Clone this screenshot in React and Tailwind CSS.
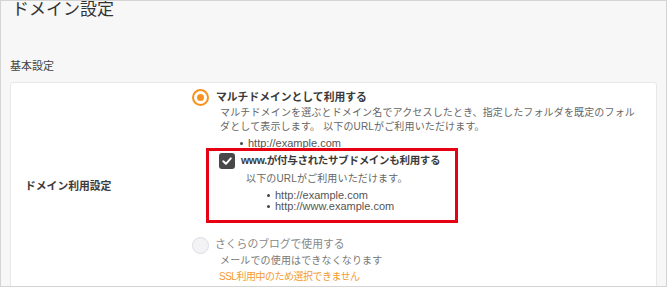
const F = "font-['Liberation_Sans','Noto_Sans_CJK_JP',sans-serif]";

function Dot() {
  return <span className="w-[3px] h-[3px] rounded-full bg-[#444] shrink-0" />;
}

export default function App() {
  return (
    <div className={`w-[668px] h-[288px] bg-white ${F}`}>
      <div className="w-[667px] h-[287px] border border-[#d4d4d4] bg-[#f7f7f7] overflow-hidden">
        <div className="-mt-px pl-[11px] h-[20px] leading-[20px] text-[17px] text-[#333]">ドメイン設定</div>
        <div className="mt-[38px] pl-[9px] h-[16px] leading-[16px] text-[11px] text-[#444]">基本設定</div>
        <div className="mt-[8px] ml-[9px] w-[647px] h-[260px] bg-white border border-[#e8e8e8] rounded-[3px] flex">
          <div className="w-[181px] shrink-0 pl-[14px] pt-[95px]">
            <div className="leading-[16px] text-[10.8px] font-bold text-[#3a3a3a] whitespace-nowrap">ドメイン利用設定</div>
          </div>
          <div className="pt-[6px]">
            <div className="flex items-center h-[16px]">
              <span className="w-[17px] h-[17px] rounded-full border-2 border-[#f7931e] bg-white flex items-center justify-center shrink-0">
                <span className="w-[7px] h-[7px] rounded-full bg-[#f7931e]" />
              </span>
              <span className="ml-[7px] text-[10.8px] font-bold text-[#3a3a3a] whitespace-nowrap">マルチドメインとして利用する</span>
            </div>
            <div className="mt-[1px] pl-[28px] text-[10px] tracking-[0.15px] leading-[14px] text-[#666] whitespace-nowrap">
              マルチドメインを選ぶとドメイン名でアクセスしたとき、指定したフォルダを既定のフォル<br />
              ダとして表示します。 以下のURLがご利用いただけます。
            </div>
            <div className="mt-[3px] pl-[48px] flex items-center h-[12px]">
              <Dot />
              <span className="ml-[5px] text-[11px] text-[#555] whitespace-nowrap">http://example.com</span>
            </div>
            <div className="relative -mt-px ml-[14px] w-[252px] border-[3px] border-[#e60012] pt-[2px] pb-[8px]">
              <div className="flex items-center h-[16px] pl-[10px]">
                <span className="w-[16px] h-[16px] rounded-[3px] bg-[#484848] flex items-center justify-center shrink-0">
                  <svg width="12" height="12" viewBox="0 0 12 12" fill="none">
                    <path d="M2.3 6.3 L4.9 8.8 L9.8 3.4" stroke="white" strokeWidth="2" strokeLinecap="round" strokeLinejoin="round" />
                  </svg>
                </span>
                <span className="ml-[6px] text-[10.5px] tracking-[-0.3px] font-bold text-[#3a3a3a] whitespace-nowrap">www.が付与されたサブドメインも利用する</span>
              </div>
              <div className="mt-[3px] pl-[37px] text-[10px] tracking-[0.15px] leading-[14px] text-[#666] whitespace-nowrap">以下のURLがご利用いただけます。</div>
              <div className="mt-[4px] pl-[58px]">
                <div className="flex items-center h-[11px]">
                  <Dot />
                  <span className="ml-[5px] text-[11px] text-[#555] whitespace-nowrap">http://example.com</span>
                </div>
                <div className="flex items-center h-[11px]">
                  <Dot />
                  <span className="ml-[5px] text-[11px] text-[#555] whitespace-nowrap">http://www.example.com</span>
                </div>
              </div>
            </div>
            <div className="mt-[13px] flex items-center h-[16px]">
              <span className="w-[17px] h-[17px] rounded-full border border-[#dcdce2] bg-[#f3f3f6] shrink-0 translate-y-[1px]" />
              <span className="ml-[6px] text-[10.8px] text-[#888] whitespace-nowrap">さくらのブログで使用する</span>
            </div>
            <div className="mt-[1px] pl-[28px] text-[10px] tracking-[0.15px] leading-[16px] text-[#777] whitespace-nowrap">メールでの使用はできなくなります</div>
            <div className="pl-[27px] text-[10px] tracking-[-0.5px] leading-[16px] text-[#f39a2f] whitespace-nowrap">SSL利用中のため選択できません</div>
          </div>
        </div>
      </div>
    </div>
  );
}
